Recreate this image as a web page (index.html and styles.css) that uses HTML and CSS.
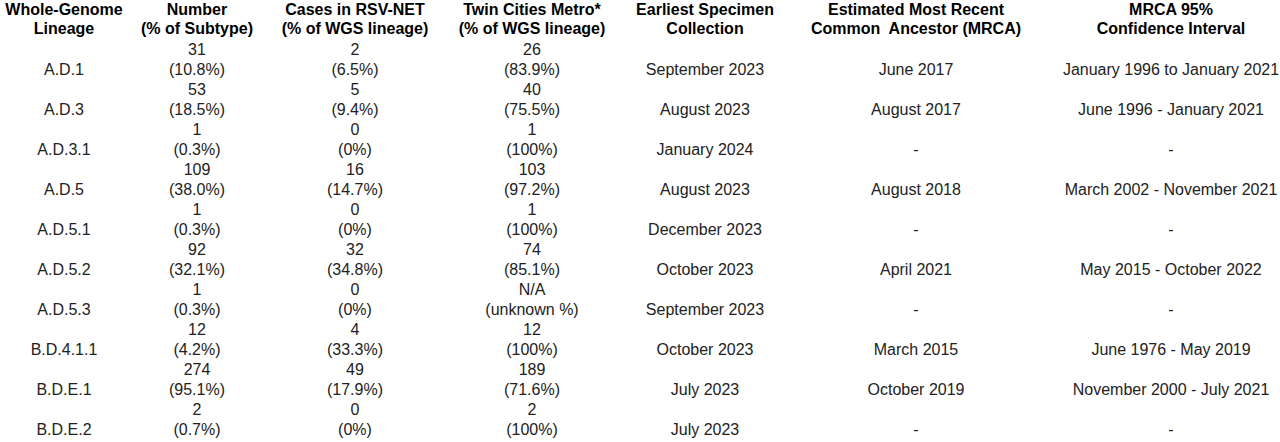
FILE: index.html
```html
<!DOCTYPE html>
<html lang="en">
<head>
<meta charset="utf-8">
<title>RSV Whole-Genome Lineages</title>
<link rel="stylesheet" href="styles.css">
</head>
<body>
<table class="lineages">
  <colgroup>
    <col class="c-lineage">
    <col class="c-number">
    <col class="c-cases">
    <col class="c-metro">
    <col class="c-earliest">
    <col class="c-mrca">
    <col class="c-ci">
  </colgroup>
  <thead>
    <tr>
      <th>Whole-Genome<br>Lineage</th>
      <th>Number<br>(% of Subtype)</th>
      <th>Cases in RSV-NET<br>(% of WGS lineage)</th>
      <th>Twin Cities Metro*<br>(% of WGS lineage)</th>
      <th>Earliest Specimen<br>Collection</th>
      <th class="mrca">Estimated Most Recent<br>Common&nbsp; Ancestor (MRCA)</th>
      <th>MRCA 95%<br>Confidence Interval</th>
    </tr>
  </thead>
  <tbody>
    <tr><td>A.D.1</td><td>31<br>(10.8%)</td><td>2<br>(6.5%)</td><td>26<br>(83.9%)</td><td>September 2023</td><td class="mrca">June 2017</td><td>January 1996 to January 2021</td></tr>
    <tr><td>A.D.3</td><td>53<br>(18.5%)</td><td>5<br>(9.4%)</td><td>40<br>(75.5%)</td><td>August 2023</td><td class="mrca">August 2017</td><td>June 1996 - January 2021</td></tr>
    <tr><td>A.D.3.1</td><td>1<br>(0.3%)</td><td>0<br>(0%)</td><td>1<br>(100%)</td><td>January 2024</td><td class="mrca">-</td><td>-</td></tr>
    <tr><td>A.D.5</td><td>109<br>(38.0%)</td><td>16<br>(14.7%)</td><td>103<br>(97.2%)</td><td>August 2023</td><td class="mrca">August 2018</td><td>March 2002 - November 2021</td></tr>
    <tr><td>A.D.5.1</td><td>1<br>(0.3%)</td><td>0<br>(0%)</td><td>1<br>(100%)</td><td>December 2023</td><td class="mrca">-</td><td>-</td></tr>
    <tr><td>A.D.5.2</td><td>92<br>(32.1%)</td><td>32<br>(34.8%)</td><td>74<br>(85.1%)</td><td>October 2023</td><td class="mrca">April 2021</td><td>May 2015 - October 2022</td></tr>
    <tr><td>A.D.5.3</td><td>1<br>(0.3%)</td><td>0<br>(0%)</td><td>N/A<br>(unknown %)</td><td>September 2023</td><td class="mrca">-</td><td>-</td></tr>
    <tr><td>B.D.4.1.1</td><td>12<br>(4.2%)</td><td>4<br>(33.3%)</td><td>12<br>(100%)</td><td>October 2023</td><td class="mrca">March 2015</td><td>June 1976 - May 2019</td></tr>
    <tr><td>B.D.E.1</td><td>274<br>(95.1%)</td><td>49<br>(17.9%)</td><td>189<br>(71.6%)</td><td>July 2023</td><td class="mrca">October 2019</td><td>November 2000 - July 2021</td></tr>
    <tr><td>B.D.E.2</td><td>2<br>(0.7%)</td><td>0<br>(0%)</td><td>2<br>(100%)</td><td>July 2023</td><td class="mrca">-</td><td>-</td></tr>
  </tbody>
</table>
</body>
</html>
```
FILE: styles.css
```css
html, body {
  margin: 0;
  padding: 0;
  background: #ffffff;
}

body {
  font-family: "Liberation Sans", Arial, sans-serif;
  font-size: 16px;
  color: #222222;
}

.lineages {
  width: 1280px;
  table-layout: fixed;
  border-collapse: collapse;
  border-spacing: 0;
}

.c-lineage { width: 128px; }
.c-number { width: 138px; }
.c-cases { width: 178px; }
.c-metro { width: 176px; }
.c-earliest { width: 170px; }
.c-mrca { width: 272px; }
.c-ci { width: 218px; }

.lineages th,
.lineages td {
  padding: 0;
  text-align: center;
  white-space: nowrap;
}

.lineages th {
  height: 40px;
  line-height: 19px;
  font-weight: bold;
  color: #000000;
  vertical-align: top;
}

.lineages td {
  height: 40px;
  line-height: 20px;
  vertical-align: bottom;
}

.lineages .mrca {
  padding-right: 20px;
}
```
